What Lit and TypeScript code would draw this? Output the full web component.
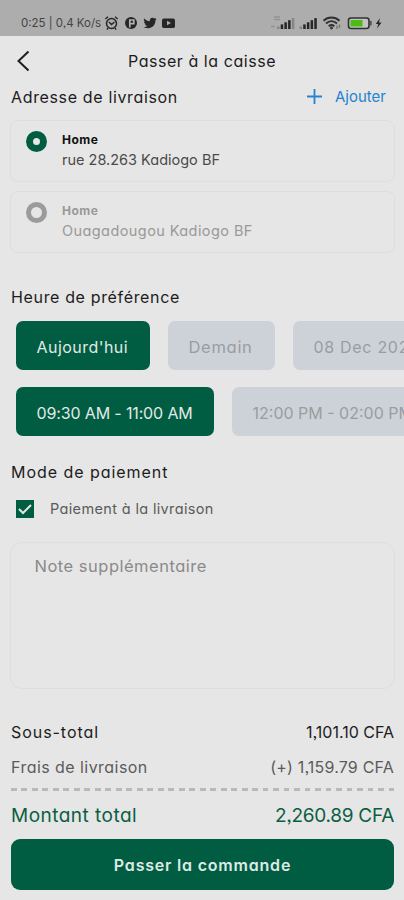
import { LitElement, html, css, svg } from "lit";
import { customElement } from "lit/decorators.js";
import { classMap } from "lit/directives/class-map.js";

const addresses = [
  { label: "Home", line: "rue 28.263 Kadiogo BF", selected: true },
  { label: "Home", line: "Ouagadougou Kadiogo BF", selected: false },
];

const bars = (faded: number[]) => svg`${[0, 1, 2, 3, 4].map(
  (i) => svg`<rect x=${i * 3.7} y=${8.5 - i * 2.1} width="2.5" height=${2.5 + i * 2.1}
    fill=${faded.includes(i) ? "#858585" : "#262626"} />`
)}`;

@customElement("app-root")
export class AppRoot extends LitElement {
  static styles = css`
    :host {
      display: flex;
      flex-direction: column;
      width: 404px;
      height: 900px;
      overflow: hidden;
      box-sizing: border-box;
      background: #e6e6e6;
      color: #1c1c1c;
      font-family: Inter, "Noto Sans", sans-serif;
      font-feature-settings: "cv11", "ss03";
      font-size: 16px;
      white-space: nowrap;
    }
    * { box-sizing: border-box; }
    svg { display: block; flex: none; }
    .status {
      height: 36px;
      flex: none;
      display: flex;
      align-items: center;
      background: #adadad;
      padding: 10px 19px 0 21px;
      color: #444;
      font-size: 11.5px;
    }
    .clock { width: 83px; }
    .spacer { flex: 1; }
    .header {
      height: 50px;
      flex: none;
      display: grid;
      grid-template-columns: 60px 1fr 60px;
      align-items: center;
      text-align: center;
    }
    .header svg { margin-left: 16px; }
    .title { letter-spacing: 0.55px; }
    .section {
      height: 22px;
      flex: none;
      display: flex;
      align-items: center;
      padding: 0 18px 0 11px;
      letter-spacing: 0.65px;
    }
    .s3 { letter-spacing: 0.95px; }
    .add {
      margin-left: auto;
      display: flex;
      align-items: center;
      gap: 13px;
      color: #2583cf;
      font-size: 15px;
      letter-spacing: 0;
      padding-bottom: 2px;
    }
    .cards {
      padding: 12px 9px 0 10px;
      display: flex;
      flex-direction: column;
      gap: 9px;
      height: 178px;
      flex: none;
    }
    .card {
      flex: none;
      height: 62px;
      border: 1px solid #dedede;
      border-radius: 8px;
      padding: 10px 15px;
      display: flex;
      gap: 15px;
      color: #4b4b4b;
    }
    .radio {
      width: 21px;
      height: 21px;
      border-radius: 50%;
      border: 5px solid #9b9b9b;
      flex: none;
    }
    .on .radio {
      border: 7.5px solid #005d42;
    }
    .name { font-size: 12px; font-weight: 700; line-height: 18px; color: #111; letter-spacing: 0.5px; }
    .line { font-size: 14.5px; line-height: 22px; }
    .off .line { letter-spacing: 0.42px; }
    .off, .off .name { color: #999; }
    .chips {
      display: flex;
      gap: 18px;
      padding-left: 16px;
      height: 49px;
      flex: none;
    }
    .dates { margin-top: 13px; letter-spacing: 0.45px; }
    .times { margin: 17px 0 25px; }
    .chip {
      flex: none;
      display: flex;
      align-items: center;
      padding-left: 20.5px;
      padding-top: 3px;
      border-radius: 7px;
      background: #cdd2d8;
      color: #999da1;
    }
    .chip.picked { background: #005d42; color: #e2e9e6; }
    .today { width: 134px; }
    .tomorrow { width: 107px; font-size: 16.5px; letter-spacing: 0.7px; }
    .later { width: 140px; letter-spacing: 0.7px; }
    .slot1 { width: 198px; letter-spacing: -0.14px; }
    .slot2 { width: 200px; letter-spacing: 0; }
    .pay {
      height: 18px;
      flex: none;
      margin-top: 17px;
      padding-left: 16px;
      display: flex;
      align-items: center;
      gap: 16px;
      color: #5b5b5b;
      font-size: 14.5px;
      letter-spacing: 0.35px;
    }
    .cod { padding-bottom: 2px; }
    .note {
      height: 147px;
      flex: none;
      margin: 24px 9px 0 10px;
      padding: 12px 23.5px;
      border: 1px solid #dedede;
      border-radius: 12px;
      color: #8a8a8a;
      line-height: 22px;
      font-size: 16.5px;
      letter-spacing: 0.5px;
    }
    .row {
      height: 24px;
      flex: none;
      display: flex;
      justify-content: space-between;
      align-items: center;
      padding: 0 10px 0 11px;
    }
    .subtotal { margin-top: 31px; }
    .r1 { letter-spacing: 0.95px; }
    .fee { margin-top: 11px; color: #5b5b5b; }
    .r2 { letter-spacing: 0.45px; }
    .v2 { letter-spacing: 0.2px; }
    .dash {
      height: 3px;
      flex: none;
      margin: 9px 9px 0 11px;
      background: repeating-linear-gradient(90deg, #b9b9b9 0 5.5px, transparent 5.5px 10.5px);
    }
    .total { margin-top: 12px; color: #0b5e43; font-size: 19px; }
    .r3 { letter-spacing: 0.48px; }
    .v3 { letter-spacing: -0.28px; }
    .order {
      height: 51px;
      flex: none;
      margin: 12px 10px 0 11px;
      border: 0;
      border-radius: 9px;
      background: #005d42;
      color: #dfe9e5;
      font: inherit;
      font-weight: 600;
      font-feature-settings: inherit;
      letter-spacing: 0.8px;
      padding: 0;
    }
  `;

  render() {
    return html`
      <div class="status">
        <span class="clock">0:25 | 0,4 Ko/s</span>
        <svg width="72" height="16" viewBox="0 0 72 16" fill="none" stroke="#262626">
          <circle cx="7.5" cy="8.5" r="5" stroke-width="1.5" />
          <path d="M1.3 4 4 1.7M11 1.7l2.7 2.3M5 7l2.500 2.500L10.500 7M4 13l-1 1.6M11 13l1 1.6" stroke-width="1.4" />
          <circle cx="27" cy="8" r="6" fill="#262626" stroke="none" />
          <path d="M25.800 12.500V5h4v3.600h-3.200" stroke="#b0b0b0" stroke-width="1.700" />
          <path fill="#262626" stroke="none" d="M40 3.3c1.5 1.8 3.4 2.8 5.8 3-.5-2.1 1-3.6 2.8-3.6.8 0 1.5.3 2 .8l1.7-.6-1 1.6 1.4-.4-1.3 1.5c.1 4.2-3 7.7-7.2 7.7-1.700 0-3.200-.400-4.500-1.200 1.500.1 2.700-.300 3.800-1.100-1.300-.1-2.200-.8-2.600-1.900h1.200c-1.300-.4-2.100-1.400-2.100-2.700l1.200.3C40 5.900 39.500 4.700 40 3.300Z" />
          <rect x="58" y="3.500" width="13" height="9.500" rx="1.800" fill="#262626" stroke="none" />
          <path d="m63 5.800 4 2.200-4 2.200Z" fill="#aaa" stroke="none" />
        </svg>
        <span class="spacer"></span>
        <svg width="114" height="18" viewBox="0 0 114 18">
          <path d="M3 3h6M3 5.500h6M0 12.500h4" stroke="#929292" stroke-width="1.500" />
          <g transform="translate(6 4)">${bars([0, 4])}</g>
          <g transform="translate(28.500 4)">${bars([0])}</g>
          <g fill="none" stroke="#303030" stroke-width="1.900">
            <path d="M52.500 6.700c4.700-4.300 11.300-4.300 16 0M55 9.500c3.300-3 7.700-3 11 0M57.700 12.200c1.800-1.500 3.800-1.500 5.600 0" />
          </g>
          <circle cx="60.500" cy="14" r="1.400" fill="#303030" />
          <path d="M66 15v-3.500M68.500 10.500V14" stroke="#777" stroke-width="1.400" />
          <rect x="77.500" y="4" width="20.500" height="10.500" rx="2.500" fill="#c4c4c4" stroke="#303030" stroke-width="1.600" />
          <rect x="79.500" y="6" width="12" height="6.500" fill="#4cbb16" />
          <path d="M99.800 7v4.500" stroke="#555" stroke-width="1.800" />
          <path d="m109 4-4.200 6h2.500l-1.300 4.500 4.500-6h-2.600Z" fill="#262626" />
        </svg>
      </div>
      <div class="header">
        <svg width="15" height="22" viewBox="0 0 15 22" fill="none" stroke="#1f1f1f" stroke-width="2"><path d="m12.500 1.500-10 9.500 10 9.500" /></svg>
        <span class="title">Passer à la caisse</span>
      </div>
      <div class="section">
        <span class="s1">Adresse de livraison</span>
        <span class="add">
          <svg width="15" height="15" viewBox="0 0 15 15" stroke="#2583cf" stroke-width="1.800"><path d="M7.500 0v15M0 7.500h15" /></svg>
          Ajouter
        </span>
      </div>
      <div class="cards">
        ${addresses.map(
          (a) => html`<div class=${classMap({ card: true, on: a.selected, off: !a.selected })}>
            <span class="radio"></span>
            <div>
              <div class="name">${a.label}</div>
              <div class="line">${a.line}</div>
            </div>
          </div>`
        )}
      </div>
      <div class="section"><span class="s2">Heure de préférence</span></div>
      <div class="chips dates">
        <span class="chip picked today">Aujourd'hui</span>
        <span class="chip tomorrow">Demain</span>
        <span class="chip later">08 Dec 2023</span>
      </div>
      <div class="chips times">
        <span class="chip picked slot1">09:30 AM - 11:00 AM</span>
        <span class="chip slot2">12:00 PM - 02:00 PM</span>
      </div>
      <div class="section"><span class="s3">Mode de paiement</span></div>
      <div class="pay">
        <svg width="18" height="18" viewBox="0 0 18 18"><path fill="#005d42" d="M0 0h18v18H0z" /><path d="m3 9 4 4 8-8" fill="none" stroke="#e6e6e6" stroke-width="2" /></svg>
        <span class="cod">Paiement à la livraison</span>
      </div>
      <div class="note">Note supplémentaire</div>
      <div class="row subtotal"><span class="r1">Sous-total</span><span>1,101.10 CFA</span></div>
      <div class="row fee"><span class="r2">Frais de livraison</span><span class="v2">(+) 1,159.79 CFA</span></div>
      <div class="dash"></div>
      <div class="row total"><span class="r3">Montant total</span><span class="v3">2,260.89 CFA</span></div>
      <button class="order">Passer la commande</button>
    `;
  }
}
